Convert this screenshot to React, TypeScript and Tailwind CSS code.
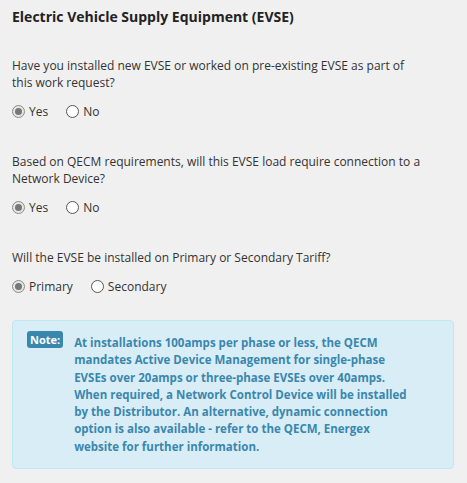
const Radio = ({ checked, label }: { checked?: boolean; label: string }) => (
  <label className="flex items-center gap-[4px]">
    <span
      className={
        checked
          ? "flex h-[13px] w-[13px] items-center justify-center rounded-full border border-[#8a8a8a] bg-[#e6e6e6]"
          : "h-[13px] w-[13px] rounded-full border border-[#555] bg-white"
      }
    >
      {checked && <span className="h-[7px] w-[7px] rounded-full bg-[#777]" />}
    </span>
    <span>{label}</span>
  </label>
)

const Question = ({ lines, options }: { lines: string[]; options: [string, string] }) => (
  <div>
    <p className="leading-[17px]">
      {lines.map((l, i) => (
        <span key={i} className="block">
          {l}
        </span>
      ))}
    </p>
    <div className="mt-[12px] flex gap-[18px] leading-[17px]">
      <Radio checked label={options[0]} />
      <Radio label={options[1]} />
    </div>
  </div>
)

export default function App() {
  return (
    <div
      className="min-h-[483px] w-[467px] bg-[#f0f0f0] px-[12px] pt-[7px] text-[12px] text-[#333]"
      style={{ fontFamily: '"Open Sans", sans-serif' }}
    >
      <h2 className="text-[14px] font-bold leading-[20px] text-[#222]">
        Electric Vehicle Supply Equipment (EVSE)
      </h2>

      <div className="mt-[30px] space-y-[33px]">
        <Question
          lines={["Have you installed new EVSE or worked on pre-existing EVSE as part of", "this work request?"]}
          options={["Yes", "No"]}
        />
        <Question
          lines={["Based on QECM requirements, will this EVSE load require connection to a", "Network Device?"]}
          options={["Yes", "No"]}
        />
        <Question lines={["Will the EVSE be installed on Primary or Secondary Tariff?"]} options={["Primary", "Secondary"]} />
      </div>

      {/* Note */}
      <div className="mt-[25px] mr-[1px] flex h-[149px] gap-[11px] rounded-[4px] border border-[#bce8f1] bg-[#d9edf7] pl-[14px] pt-[10px]">
        <span className="h-[17px] shrink-0 rounded-[3px] bg-[#3a87ad] px-[3px] text-[11px] font-bold leading-[17px] text-white">
          Note:
        </span>
        <p className="whitespace-nowrap pt-[3px] text-[11.5px] font-bold leading-[17.3px] text-[#3a87ad]">
          At installations 100amps per phase or less, the QECM
          <br />
          mandates Active Device Management for single-phase
          <br />
          EVSEs over 20amps or three-phase EVSEs over 40amps.
          <br />
          When required, a Network Control Device will be installed
          <br />
          by the Distributor. An alternative, dynamic connection
          <br />
          option is also available - refer to the QECM, Energex
          <br />
          website for further information.
        </p>
      </div>
    </div>
  )
}
